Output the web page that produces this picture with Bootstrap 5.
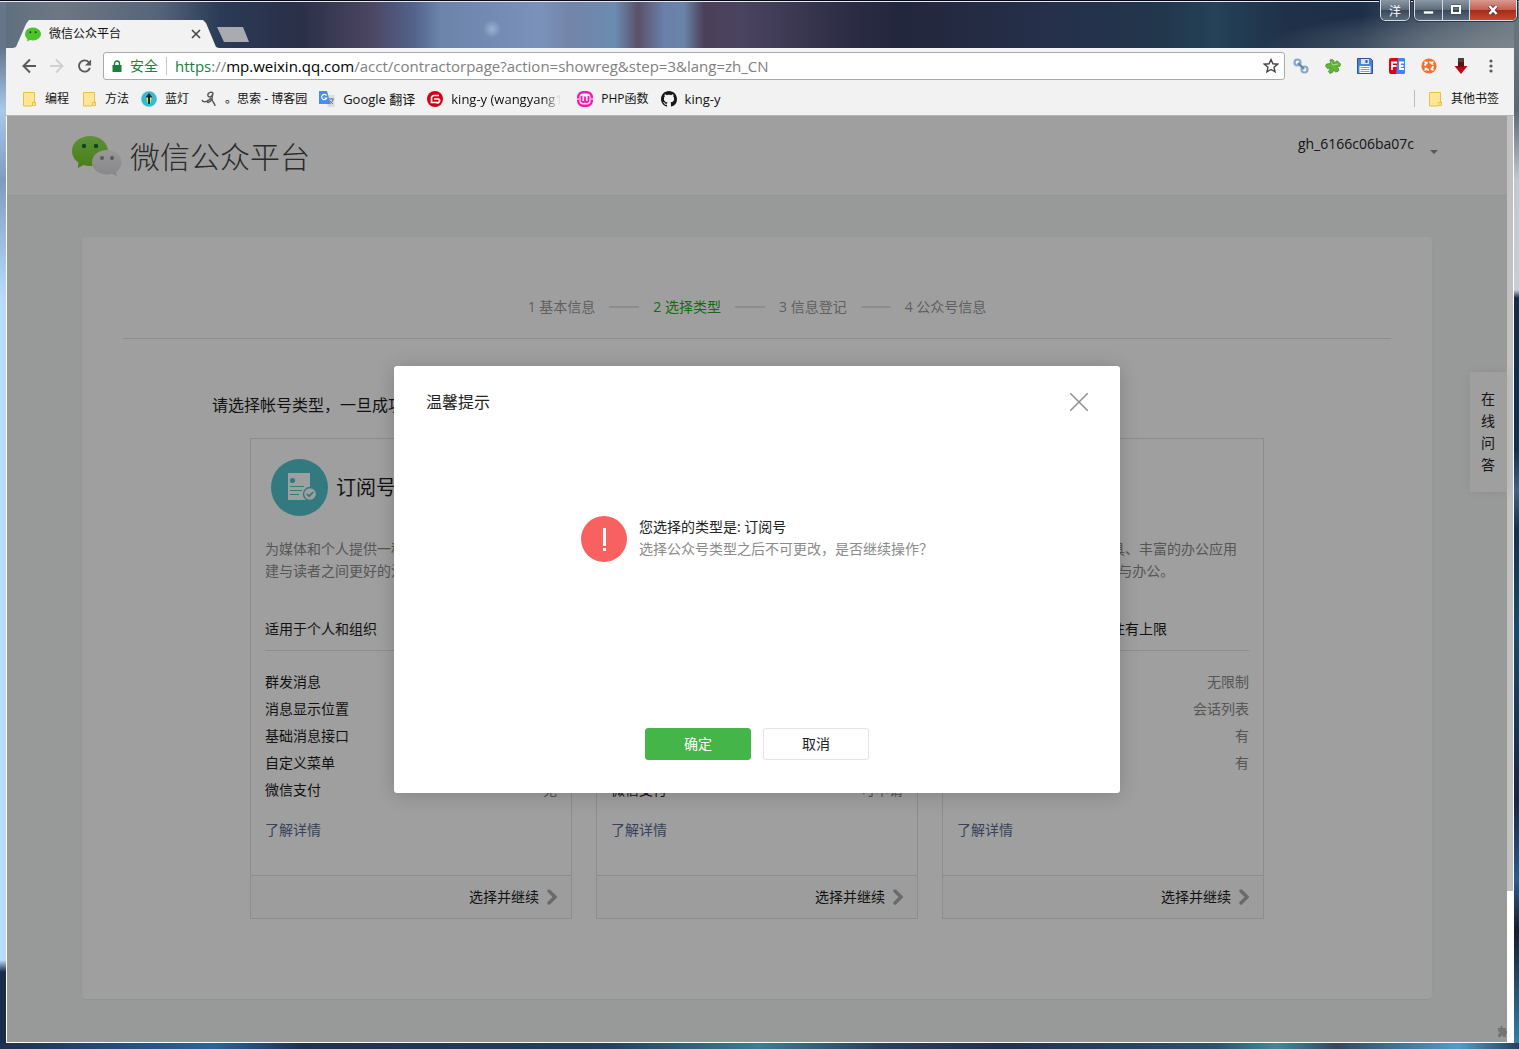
<!DOCTYPE html>
<html lang="zh-CN">
<head>
<meta charset="utf-8">
<meta name="viewport" content="width=device-width, initial-scale=1">
<title>微信公众平台</title>
<link href="https://cdn.jsdelivr.net/npm/bootstrap@5.3.0/dist/css/bootstrap.min.css" rel="stylesheet">
<style>
body{font-family:"Open Sans","Noto Sans CJK SC",sans-serif;font-size:14px;line-height:22px;color:#1c1c1c;background:#1b2d48}
button{font-family:inherit}
svg{display:block;flex:none}
.desktop{min-height:100vh;padding:0 5px 6px 6px;
 background:
 linear-gradient(#07081a,#07081a) top/100% 1px no-repeat,
 linear-gradient(#e4e8f0,#e4e8f0) 0 1px/100% 1px no-repeat,
 linear-gradient(90deg,#20304c,#2b62a0 14%,#21304c 20%,#25405c 40%,#3c7c94 50%,#2b4058 58%,#23304c 66%,#2d506c 80%,#3f8a98 84%,#36465c 88%,#4aa0c8 96%,#27405c) bottom/100% 6px no-repeat,
 linear-gradient(#66758a 48px,#a9c8ea 110px,#7f9cc0 180px,#b8dcff 300px,#b8dcff 960px,#1a2c4c 972px) left/6px 100% no-repeat,
 linear-gradient(#66727c 48px,#5a6873 110px,#c3c9d0 180px,#c9ced4 290px,#172a44 298px,#12304c 450px,#476080 490px,#14304c 530px,#1b4a68 630px,#1a2440 800px,#2e5c88 880px,#161c30 930px,#3a84a8) right/5px 100% no-repeat,
 radial-gradient(ellipse 260px 40px at 1519px 48px,rgba(125,135,142,.9),transparent),
 radial-gradient(ellipse 9px 9px at 492px 29px,rgba(170,195,220,.7),transparent),
 linear-gradient(90deg,#5f6f7e,#6d7783 60px,#56647a 160px,#2b3a56 220px,#2a3048 300px,#4b4560 370px,#53648c 415px,#6c84aa 440px,#7a92ba 540px,#7484a8 570px,#6a8cb0 615px,#5c5068 638px,#6a80aa 664px,#6a84aa 684px,#4c4058 704px,#4b4460 740px,#2c2c44 850px,#22263c 900px,#26304a 1050px,#22364c 1160px,#244258 1215px,#1f3048 1290px,#1d2e48 1360px,#4a5a6c 1450px,#6b7782)}
.titlebar{height:48px}
.browser-tab{width:206px;height:28px;margin:20px 0 0 7px;padding:0 17px 0 12px;background:#f2f2f2;clip-path:polygon(0 100%,3px 96%,13px 4px,16px 0,190px 0,193px 3px,203px 96%,206px 100%);font-size:12px;color:#111}
.new-tab{width:32px;height:15px;margin:27px 0 0 -2px;background:#a9abb1;clip-path:polygon(0 0,26px 0,100% 100%,7px 100%);border:0}
.caption-keys{margin-right:-3px}
.glass{height:21px;border:1px solid #d5dbe2;border-top:0;border-radius:0 0 5px 5px;outline:1px solid #2c3644;background:linear-gradient(#8b97a4,#5d6b7a 48%,#37465a 50%,#5c6a7a);overflow:hidden}
.glass button{border:0;background:none;padding:0;color:#fff;font-size:12px;line-height:20px}
.glass button+button{border-left:1px solid #d5dbe2}
.glass .shut{background:linear-gradient(#d99a90,#c4604f 48%,#a52a18 50%,#c44a30)}
.chrome-bar{background:#f2f2f2}
.toolbar-row{padding:4px 17px 0 16px}
.nav-keys{gap:14px;margin-right:11px}
.address{height:28px;padding:0 5px 0 8px;border:1px solid #aaa;border-radius:3px;background:#fff;font-size:14px}
.address .url{font-size:15px;color:#808080;outline:0;white-space:nowrap}
.safe{color:#188038}
.tool-btn{border:0;background:none;padding:0}
.bookmarks{height:36px;font-size:12px;padding:2px 15px 0;border-bottom:1px solid #b5b5b5}
.bookmarks a{color:#111;text-decoration:none;white-space:nowrap}
.latin-name{font-size:13px}
.fade-name{width:110px;overflow:hidden;-webkit-mask-image:linear-gradient(90deg,#000 92px,transparent 110px)}
.viewport{background:#f4f6f5;border-left:1px solid #fff}
.scroller{width:7px;border-right:1px solid #fff;background:linear-gradient(#c1c1c1 775px,#fff 775px)}
.shell{border-bottom:1px solid #fff}
.site-header{height:80px;background:#fff;padding:0 65px;border-bottom:1px solid #f0f1f1}
.brand{font-size:30px;line-height:40px;font-weight:300;color:#444}
.user-menu{gap:12px}
.panel-box{margin:41px 75px 43px;padding:59px 41px 80px;min-height:762px;background:#fff;border-radius:4px;box-shadow:0 1px 2px rgba(0,0,0,.05)}
.steps{gap:14px;color:#9a9a9a;padding-bottom:20px;border-bottom:1px solid #dfe0e1}
.steps i{width:30px;height:2px;background:#dfe2e6}
.steps .now{color:#1aad19}
.intro{font-size:16px;line-height:24px;margin:54px 0 21px 89px}
.types{max-width:1014px;gap:24px}
.type-box{border:1px solid #e2e2e2}
.type-name{font-size:20px;line-height:30px}
.type-body{padding:22px 14px 34px}
.muted-text{color:#8a8a8a}
.scope{padding-bottom:10px;border-bottom:1px solid #e2e2e2;margin:36px 0 17px}
.features{min-height:135px;line-height:27px}
.more{color:#576b95;text-decoration:none}
.type-foot{height:43px;padding:0 14px;border-top:1px solid #e2e2e2;background:#fcfcfc}
.ask{top:256px;right:0;width:37px;padding:16px 11px;background:#fff;box-shadow:0 0 12px rgba(0,0,40,.08);color:#222;text-decoration:none}
.shade{inset:0;background:rgba(0,0,0,.376)}
.dialog-box{max-width:726px;margin:250px auto 0}
.dialog-box .modal-content{border:0;border-radius:3px;background:#fff;box-shadow:0 2px 20px rgba(0,0,0,.18);color:#222}
.dialog-box .modal-header{padding:24px 32px;border:0}
.dialog-box .modal-title{font-size:16px;line-height:24px;font-weight:400}
.dialog-box .modal-body{padding:78px 32px 166px}
.dialog-box .modal-footer{padding:0 32px 33px;border:0;gap:12px}
.dialog-box .modal-footer .btn{width:106px;height:32px;margin:0;padding:0;border-radius:3px;font-size:14px;line-height:30px}
.dialog-box .ok{background:#44b549;color:#fff;border-color:#44b549}
.dialog-box .cancel{background:#fff;border-color:#e4e5ea;color:#222}
.plug{right:0;bottom:5px}
</style>
</head>
<body>
<svg width="0" height="0" class="position-absolute" aria-hidden="true">
 <symbol id="folder" viewBox="0 0 16 16"><path d="M2.500 1.500h11v9.500h1v3.500h-3l-.5.500H2.500z" fill="#fee695" stroke="#e9c046"/><path d="M11.500 14.500v-3h2.500" fill="none" stroke="#e9c046"/></symbol>
 <symbol id="next" viewBox="0 0 12 16"><path d="M2 2l6 6-6 6" fill="none" stroke="#aaa" stroke-width="3.400" stroke-linecap="round"/></symbol>
</svg>
<div class="desktop d-flex flex-column">
 <header class="titlebar d-flex align-items-start">
  <div class="browser-tab d-flex align-items-center">
   <svg width="16" height="15" viewBox="0 0 16 15"><path d="M8 .5C3.600.5 0 3.300 0 7c0 2 1 3.700 2.500 4.900L2 14.500l3-1.500c1 .3 2 .4 3 .4 4.400 0 8-2.900 8-6.400S12.400.5 8 .5z" fill="#4dc22f"/><circle cx="5.300" cy="5.300" r="1" fill="#174a10"/><circle cx="10.700" cy="5.300" r="1" fill="#174a10"/></svg>
   <span class="ms-2 flex-grow-1">微信公众平台</span>
   <button class="tool-btn" aria-label="关闭标签页"><svg width="12" height="12" viewBox="0 0 12 12"><path d="M2 2l8 8M10 2l-8 8" stroke="#444" stroke-width="1.600"/></svg></button>
  </div>
  <button class="new-tab" aria-label="新标签页"></button>
  <div class="caption-keys d-flex ms-auto">
   <div class="glass me-1"><button class="px-2">洋</button></div>
   <div class="glass d-flex">
    <button class="px-2" aria-label="最小化"><svg width="11" height="20" viewBox="0 0 11 20"><path d="M.500 11h10v3H.500z" fill="#fff" stroke="#39434f" stroke-width=".6"/></svg></button>
    <button class="px-2" aria-label="最大化"><svg width="10" height="20" viewBox="0 0 10 20"><path d="M1 6h8v7H1z" fill="none" stroke="#39434f" stroke-width="3"/><path d="M1 6h8v7H1z" fill="none" stroke="#fff" stroke-width="2"/></svg></button>
    <button class="shut px-3" aria-label="关闭"><svg width="14" height="20" viewBox="0 0 14 20"><path d="M3.500 6l7 8M10.500 6l-7 8" stroke="#4a2c30" stroke-width="4"/><path d="M3.500 6l7 8M10.500 6l-7 8" stroke="#fff" stroke-width="2.600"/></svg></button>
   </div>
  </div>
 </header>

 <div class="chrome-bar">
  <div class="toolbar-row d-flex align-items-center">
   <div class="nav-keys d-flex">
   <button class="tool-btn" aria-label="后退"><svg width="14" height="16" viewBox="0 0 14 16"><path d="M14 8H2M8 1.500L1.500 8 8 14.500" fill="none" stroke="#5a5a5a" stroke-width="2"/></svg></button>
   <button class="tool-btn" aria-label="前进"><svg width="14" height="16" viewBox="0 0 14 16"><path d="M0 8h12M6 1.500L12.500 8 6 14.500" fill="none" stroke="#d0d0d0" stroke-width="2"/></svg></button>
   <button class="tool-btn" aria-label="刷新"><svg width="14" height="16" viewBox="1 0 15 16"><path d="M13 4.500A6 6 0 1 0 13.800 10" fill="none" stroke="#5a5a5a" stroke-width="2"/><path d="M15 1v6.500H8.500z" fill="#5a5a5a"/></svg></button>
   </div>
   <div class="address flex-grow-1 d-flex align-items-center">
    <svg width="10" height="12" viewBox="0 0 10 12"><path d="M.500 5h9v7h-9z" fill="#188038"/><path d="M2.500 5V3.500a2.500 2.500 0 0 1 5 0V5" fill="none" stroke="#188038" stroke-width="1.400"/></svg>
    <span class="safe mx-2">安全</span><span class="vr my-1"></span>
    <div class="url flex-grow-1 ms-2" role="textbox" aria-label="地址" contenteditable="true" spellcheck="false"><span class="safe">https</span>://<span class="text-black">mp.weixin.qq.com</span>/acct/contractorpage?action=showreg&amp;step=3&amp;lang=zh_CN</div>
    <button class="tool-btn" aria-label="收藏"><svg width="16" height="16" viewBox="0 0 16 16"><path d="M8 1.500l1.900 4.300 4.700.4-3.600 3.100 1.100 4.600L8 11.500l-4.100 2.400L5 9.300 1.400 6.200l4.700-.4z" fill="none" stroke="#444" stroke-width="1.400"/></svg></button>
   </div>
   <div class="d-flex align-items-center gap-3 ms-2">
    <svg width="16" height="16" viewBox="0 0 16 16" fill="none"><circle cx="4.500" cy="4.500" r="3" stroke="#86a9cb" stroke-width="2.200"/><circle cx="11.500" cy="11.500" r="3" stroke="#86a9cb" stroke-width="2.200"/><path d="M5 5l6 6" stroke="#6286ad" stroke-width="2.200"/></svg>
    <svg width="16" height="16" viewBox="0 0 16 16"><path d="M5 2c2-1 4-.5 4 2l-.5 1.500 2-1.500c1-1.500 2.500-1 3.500.5l2 2-1.500 2-3 .5 2.500 2-1 2.500-2.500.5-2-2.500-.5 2.500-3 1.500-1.500-2 2-3.500-3 .5L.500 8l1-2 4-.5z" fill="#62b637" stroke="#37842a" stroke-width=".7"/><path d="M6 4l2 3 5-1" fill="none" stroke="#a5e070"/></svg>
    <svg width="16" height="16" viewBox="0 0 16 16"><path d="M.500.500h13l2 2v13H.500z" fill="#4c83dd" stroke="#2851a8"/><path d="M4 1h8v5H4z" fill="#d9e4f6"/><path d="M8.500 2h2v3h-2z" fill="#2d59b0"/><path d="M2.500 8h11v7h-11z" fill="#fff"/><path d="M3.500 9.500h9M3.500 11.500h9M3.500 13.500h9" stroke="#999"/></svg>
    <svg width="16" height="16" viewBox="0 0 16 16"><rect width="16" height="16" rx="2" fill="#e8000f"/><path d="M9 0h5a2 2 0 0 1 2 2v12a2 2 0 0 1-2 2H7z" fill="#3c86f5"/><path d="M3 12V4.500h5M3 8h4.500M15 4.500h-4V11h4M11 8h3.500" fill="none" stroke="#fff" stroke-width="1.800"/></svg>
    <svg width="16" height="16" viewBox="0 0 16 16"><circle cx="8" cy="8" r="7.600" fill="#f4712b"/><circle cx="8" cy="8" r="4" fill="none" stroke="#fff" stroke-width="2" stroke-dasharray="4.300 2"/><path d="M3.500 3.500l1.500 1.500M12.500 3.500L11 5M3.500 12.500L5 11M12.500 12.500L11 11" stroke="#fff" stroke-width="1.400"/></svg>
    <svg width="16" height="16" viewBox="0 0 16 16"><path d="M5 0h6v8h3.500L8 16 1.500 8H5z" fill="#c40010"/><path d="M5 0h6v3H5z" fill="#444"/><path d="M5 4h6v5H5z" fill="#6d0913"/></svg>
    <button class="tool-btn" aria-label="菜单"><svg width="12" height="16" viewBox="0 0 12 16" fill="#5a5a5a"><circle cx="6" cy="3" r="1.600"/><circle cx="6" cy="8" r="1.600"/><circle cx="6" cy="13" r="1.600"/></svg></button>
   </div>
  </div>
  <nav class="bookmarks d-flex align-items-center" aria-label="书签">
   <div class="d-flex align-items-center gap-2 me-auto">
    <a href="#" class="d-flex gap-2 me-1 align-items-center"><svg width="16" height="16"><use href="#folder"/></svg>编程</a>
    <a href="#" class="d-flex gap-2 me-1 align-items-center"><svg width="16" height="16"><use href="#folder"/></svg>方法</a>
    <a href="#" class="d-flex gap-2 me-1 align-items-center"><svg width="16" height="16" viewBox="0 0 16 16"><circle cx="8" cy="8" r="7.800" fill="#33bdd0"/><path d="M5 6l2 7h2l2-7z" fill="#ffe043"/><path d="M8 2L4.500 6.500H7V13h2V6.500h2.500z" fill="#1c2b30"/></svg>蓝灯</a>
    <a href="#" class="d-flex gap-2 me-1 align-items-center"><svg width="16" height="16" viewBox="0 0 16 16" fill="none" stroke="#555" stroke-width="1.400"><path d="M1 9c1 3 6 2 9-2M7 5c-1-4 5-5 5-2 0 2-4 4-5 2M11.500 3l-.5 5c0 3 3 4 3 7M11 8c-3 5-6 4-4 1"/></svg>。思索 - 博客园</a>
    <a href="#" class="d-flex gap-2 me-1 align-items-center"><svg width="16" height="16" viewBox="0 0 16 16"><path d="M6 4h9.500v12H9z" fill="#dadce0"/><path d="M9 8h6M12 7v1M14 8c-.5 3-2 4-4 5M10.500 9.500L14 13" fill="none" stroke="#777"/><path d="M0 0h8l3.500 13H0z" fill="#4a8af4"/><path d="M7.500 4.600A2.600 2.600 0 1 0 7.700 7H5.300" fill="none" stroke="#fff" stroke-width="1.200"/></svg><span class="latin-name">Google 翻译</span></a>
    <a href="#" class="d-flex gap-2 me-1 align-items-center"><svg width="16" height="16" viewBox="0 0 16 16"><circle cx="8" cy="8" r="8" fill="#d0021b"/><path d="M12 4.500H7A2.500 2.500 0 0 0 4.500 7v4.500H9.500A2 2 0 0 0 11.500 8H7" fill="none" stroke="#fff" stroke-width="1.700"/></svg><span class="latin-name fade-name">king-y (wangyang13</span></a>
    <a href="#" class="d-flex gap-2 mx-1 align-items-center"><svg width="16" height="16" viewBox="0 0 16 16" fill="none"><rect x="1.200" y="1.200" width="13.600" height="13.600" rx="5" stroke="#f916b0" stroke-width="2.400"/><path d="M0 8h2M14 8h2" stroke="#fff"/><path d="M4.500 5v4.500c0 2 3.500 2 3.500 0V5.500v4c0 2 3.500 2 3.500 0V5" stroke="#f916b0" stroke-width="1.800"/></svg>PHP函数</a>
    <a href="#" class="d-flex gap-2 align-items-center"><svg width="16" height="16" viewBox="0 0 16 16"><path d="M8 0C3.580 0 0 3.580 0 8c0 3.540 2.290 6.530 5.470 7.590.4.070.55-.17.55-.38 0-.19-.01-.82-.01-1.490-2.010.37-2.530-.49-2.690-.94-.09-.23-.48-.94-.82-1.130-.28-.15-.68-.52-.01-.53.63-.01 1.080.58 1.230.82.72 1.210 1.870.87 2.330.66.070-.52.28-.87.51-1.070-1.780-.2-3.640-.89-3.640-3.950 0-.87.31-1.590.82-2.150-.08-.2-.36-1.020.08-2.120 0 0 .67-.21 2.200.82.64-.18 1.320-.27 2-.27s1.360.09 2 .27c1.530-1.040 2.200-.82 2.200-.82.44 1.100.16 1.920.08 2.120.51.56.82 1.270.82 2.150 0 3.070-1.870 3.750-3.650 3.950.29.25.54.73.54 1.480 0 1.070-.01 1.930-.01 2.200 0 .21.15.46.55.38A8.010 8.010 0 0 0 16 8c0-4.420-3.580-8-8-8z" fill="#161616"/></svg><span class="latin-name">king-y</span></a>
   </div>
   <div class="vr my-2 me-2"></div>
   <a href="#" class="d-flex gap-2 ms-1 align-items-center"><svg width="16" height="16"><use href="#folder"/></svg>其他书签</a>
  </nav>
 </div>

 <div class="shell d-flex flex-grow-1">
  <div class="viewport position-relative flex-grow-1">
   <header class="site-header d-flex justify-content-between align-items-start">
    <a href="#" class="d-flex align-items-center text-decoration-none mt-3 pt-1">
     <svg width="50" height="42" viewBox="0 0 50 42"><defs><linearGradient id="gn" x2="0" y2="1"><stop stop-color="#98e858"/><stop offset="1" stop-color="#72ca2a"/></linearGradient><linearGradient id="gy" x2="0" y2="1"><stop stop-color="#f4f4f8"/><stop offset="1" stop-color="#d8d8dd"/></linearGradient></defs><path d="M18 0C8 0 0 6.600 0 15c0 4.700 2.500 8.800 6.500 11.600L5.800 32l6-3c2 .6 4.100.9 6.200.9 10 0 18-6.700 18-14.900S28 0 18 0z" fill="url(#gn)"/><circle cx="12" cy="10" r="2.200" fill="#137035"/><circle cx="24" cy="10" r="2.200" fill="#137035"/><path d="M35 14c-8.300 0-15 5.400-15 12.200s6.700 12.200 15 12.200c1.700 0 3.300-.2 4.800-.6l5 2.500-.7-4.200c3.300-2.200 5.300-6 5.300-9.900C49.400 19.400 43.300 14 35 14z" fill="url(#gy)"/><circle cx="30" cy="22" r="2" fill="#90908f"/><circle cx="40" cy="22" r="2" fill="#90908f"/></svg>
     <span class="brand ms-2">微信公众平台</span></a>
    <button class="tool-btn user-menu d-flex align-items-center mt-3"><span class="text-dark">gh_6166c06ba07c</span><svg class="mt-3" width="16" height="8" viewBox="0 0 16 8"><path d="M4 2h8L8 6z" fill="#8c8c8c"/></svg></button>
   </header>
   <main class="panel-box">
    <div class="steps d-flex justify-content-center align-items-center">
     <span>1 基本信息</span><i></i><span class="now">2 选择类型</span><i></i><span>3 信息登记</span><i></i><span>4 公众号信息</span>
    </div>
    <p class="intro">请选择帐号类型，一旦成功</p>
    <div class="types d-flex mx-auto">
     <section class="type-box flex-fill w-100 d-flex flex-column">
      <div class="px-3 mx-1 pt-3 mt-1 d-flex align-items-center">
       <svg width="57" height="57" viewBox="0 0 57 57"><circle cx="28.500" cy="28.500" r="28.500" fill="#53c4cd"/><path d="M17 14h22v27H17z" fill="#fff"/><circle cx="21.500" cy="21.500" r="2.600" fill="#53c4cd"/><path d="M19 27.500h14M19 31.500h12M19 35.500h9" stroke="#53c4cd" stroke-width="1.200"/><circle cx="39" cy="35" r="6.500" fill="#fff" stroke="#53c4cd" stroke-width="1.400"/><path d="M35.800 34.800l2.400 2.400 4-4.200" fill="none" stroke="#53c4cd" stroke-width="1.700"/></svg>
       <span class="type-name ms-2">订阅号</span></div>
      <div class="type-body flex-grow-1">
       <div class="muted-text">为媒体和个人提供一种新的信息传播方式，构建与读者之间更好的沟通与管理模式。</div>
       <div class="scope">适用于个人和组织</div>
       <ul class="features list-unstyled mb-3">
        <li class="d-flex justify-content-between">群发消息<span class="muted-text">1条/天</span></li>
        <li class="d-flex justify-content-between">消息显示位置<span class="muted-text">订阅号列表</span></li>
        <li class="d-flex justify-content-between">基础消息接口<span class="muted-text">有</span></li>
        <li class="d-flex justify-content-between">自定义菜单<span class="muted-text">有</span></li>
        <li class="d-flex justify-content-between">微信支付<span class="muted-text">无</span></li>
       </ul>
       <a href="#" class="more d-block">了解详情</a>
      </div>
      <div class="type-foot d-flex justify-content-end align-items-center"><a href="#" class="text-reset text-decoration-none d-flex gap-2 align-items-center">选择并继续<svg width="10" height="16"><use href="#next" width="12" height="16"/></svg></a></div>
     </section>
     <section class="type-box flex-fill w-100 d-flex flex-column">
      <div class="px-3 mx-1 pt-3 mt-1 d-flex align-items-center"><svg width="57" height="57" viewBox="0 0 57 57"><circle cx="28.500" cy="28.500" r="28.500" fill="#7bc549"/></svg><span class="type-name ms-2">服务号</span></div>
      <div class="type-body flex-grow-1">
       <div class="muted-text">给企业和组织提供更强大的业务服务能力，帮助企业实现全新的公众号服务平台。</div>
       <div class="scope">不适用于个人</div>
       <ul class="features list-unstyled mb-3">
        <li class="d-flex justify-content-between">群发消息<span class="muted-text">4条/月</span></li>
        <li class="d-flex justify-content-between">消息显示位置<span class="muted-text">会话列表</span></li>
        <li class="d-flex justify-content-between">基础消息接口<span class="muted-text">有</span></li>
        <li class="d-flex justify-content-between">自定义菜单<span class="muted-text">有</span></li>
        <li class="d-flex justify-content-between">微信支付<span class="muted-text">可申请</span></li>
       </ul>
       <a href="#" class="more d-block">了解详情</a>
      </div>
      <div class="type-foot d-flex justify-content-end align-items-center"><a href="#" class="text-reset text-decoration-none d-flex gap-2 align-items-center">选择并继续<svg width="10" height="16"><use href="#next" width="12" height="16"/></svg></a></div>
     </section>
     <section class="type-box flex-fill w-100 d-flex flex-column">
      <div class="px-3 mx-1 pt-3 mt-1 d-flex align-items-center"><svg width="57" height="57" viewBox="0 0 57 57"><circle cx="28.500" cy="28.500" r="28.500" fill="#5b8fd6"/></svg><span class="type-name ms-2">企业微信</span></div>
      <div class="type-body flex-grow-1">
       <div class="muted-text">为企业提供专业的通讯工具、丰富的办公应用<br>、免费API，帮助企业沟通与办公。</div>
       <div class="scope">适用于企业客户注册，关注有上限</div>
       <ul class="features list-unstyled mb-3">
        <li class="d-flex justify-content-between">群发消息<span class="muted-text">无限制</span></li>
        <li class="d-flex justify-content-between">消息显示位置<span class="muted-text">会话列表</span></li>
        <li class="d-flex justify-content-between">基础消息接口<span class="muted-text">有</span></li>
        <li class="d-flex justify-content-between">自定义菜单<span class="muted-text">有</span></li>
       </ul>
       <a href="#" class="more d-block">了解详情</a>
      </div>
      <div class="type-foot d-flex justify-content-end align-items-center"><a href="#" class="text-reset text-decoration-none d-flex gap-2 align-items-center">选择并继续<svg width="10" height="16"><use href="#next" width="12" height="16"/></svg></a></div>
     </section>
    </div>
   </main>
   <a href="#" class="ask position-absolute">在线问答</a>
   <svg class="plug position-absolute" width="10" height="12" viewBox="0 0 10 12"><path d="M1 3h2.500c-1-3 3-3 2 0H9v3c2 0 2 3 0 3v3H6c.5-2-2.500-2-2 0H1V9c2 0 2-3 0-2.500z" fill="#bbb"/></svg>
   <div class="shade position-absolute">
    <div class="dialog-box" role="dialog" aria-modal="true" aria-labelledby="dlgTitle">
     <div class="modal-content">
      <div class="modal-header"><h2 class="modal-title" id="dlgTitle">温馨提示</h2>
       <button class="tool-btn" aria-label="关闭"><svg width="18" height="18" viewBox="0 0 18 18"><path d="M0 0l18 18M18 0L0 18" stroke="#8f8f8f" stroke-width="1.500"/></svg></button></div>
      <div class="modal-body d-flex justify-content-center">
       <svg width="46" height="46" viewBox="0 0 46 46"><circle cx="23" cy="23" r="23" fill="#f76260"/><path d="M22 12h3v18h-3zM22 32h3v3h-3z" fill="#fff"/></svg>
       <div class="ms-2 ps-1"><div>您选择的类型是: 订阅号</div><div class="muted-text">选择公众号类型之后不可更改，是否继续操作？</div></div>
      </div>
      <div class="modal-footer justify-content-center"><button class="btn ok">确定</button><button class="btn cancel">取消</button></div>
     </div>
    </div>
   </div>
  </div>
  <div class="scroller" aria-hidden="true"></div>
 </div>
</div>
<script src="https://cdn.jsdelivr.net/npm/bootstrap@5.3.0/dist/js/bootstrap.bundle.min.js"></script>
</body>
</html>
